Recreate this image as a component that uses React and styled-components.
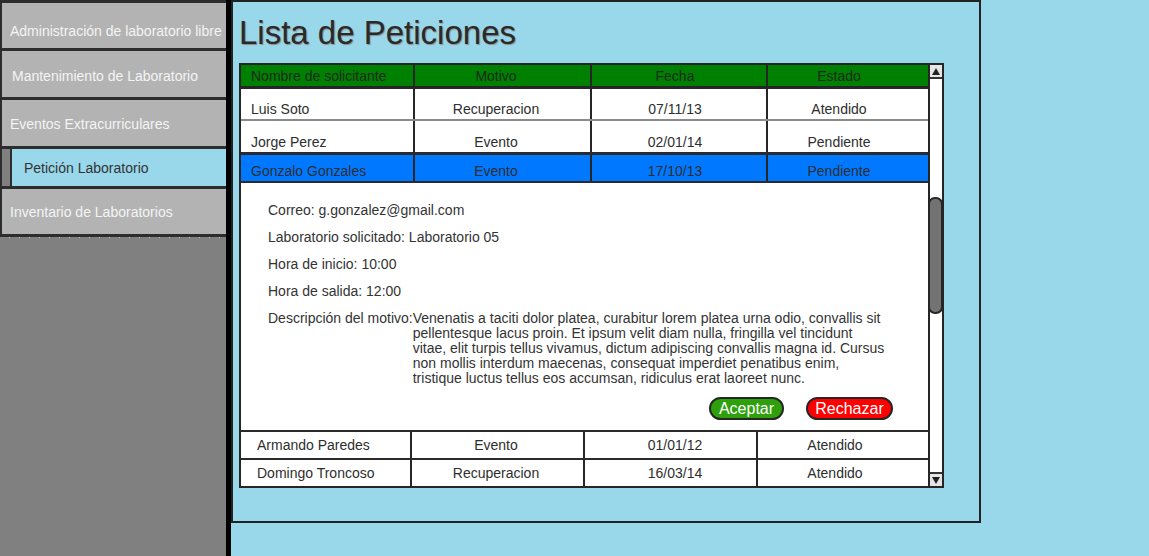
import React from 'react';
import styled, { createGlobalStyle } from 'styled-components';

const GlobalStyle = createGlobalStyle`
  body {
    margin: 0;
    background: #99d8ea;
    font-family: "Liberation Sans", Arial, sans-serif;
  }
`;

const UPPER_COLS = '174px 177px 176px 160px';
const LOWER_COLS = '171px 173px 173px 170px';

const menu = [
  { label: 'Administración de laboratorio libre', h: 45, top: 11, left: 8, first: true },
  { label: 'Mantenimiento de Laboratorio', h: 46, top: 4, left: 10 },
  { label: 'Eventos Extracurriculares', h: 46, top: 2, left: 8 },
  { label: 'Petición Laboratorio', h: 37, top: 0, left: 12, sub: true },
  { label: 'Inventario de Laboratorios', h: 45, top: 0, left: 8 },
];

const upperRows = [
  { name: 'Luis Soto', motivo: 'Recuperacion', fecha: '07/11/13', estado: 'Atendido', h: 30, line: '2px solid #8a8a8a' },
  { name: 'Jorge Perez', motivo: 'Evento', fecha: '02/01/14', estado: 'Pendiente', h: 31, line: '3px solid #2b2b2b' },
  { name: 'Gonzalo Gonzales', motivo: 'Evento', fecha: '17/10/13', estado: 'Pendiente', h: 26, line: '2px solid #2b2b2b', selected: true },
];

const lowerRows = [
  { name: 'Armando Paredes', motivo: 'Evento', fecha: '01/01/12', estado: 'Atendido', line: '2px solid #2b2b2b' },
  { name: 'Domingo Troncoso', motivo: 'Recuperacion', fecha: '16/03/14', estado: 'Atendido', line: 'none' },
];

const descripcion = [
  'Venenatis a taciti dolor platea, curabitur lorem platea urna odio, convallis sit',
  'pellentesque lacus proin. Et ipsum velit diam nulla, fringilla vel tincidunt',
  'vitae, elit turpis tellus vivamus, dictum adipiscing convallis magna id. Cursus',
  'non mollis interdum maecenas, consequat imperdiet penatibus enim,',
  'tristique luctus tellus eos accumsan, ridiculus erat laoreet nunc.',
];

const App = () => {
  return (
    <>
      <GlobalStyle />
      <Page>
        <Sidebar>
          {menu.map(item =>
            item.sub ? (
              <SubItem key={item.label} $h={item.h}>
                <SubLabel $left={item.left}>{item.label}</SubLabel>
              </SubItem>
            ) : (
              <MenuItem key={item.label} $h={item.h} $top={item.top} $left={item.left} $first={item.first}>
                {item.label}
              </MenuItem>
            )
          )}
          <Dots />
        </Sidebar>

        <Main>
          <Title>Lista de Peticiones</Title>
          <Table>
            <Rows>
              <Row $cols={UPPER_COLS} $h={21} $line="3px solid #262626" $bg="#008000">
                <Cell $head $left>Nombre de solicitante</Cell>
                <Cell $head $pr={13}>Motivo</Cell>
                <Cell $head $pr={8}>Fecha</Cell>
                <Cell $head $pr={18} $last>Estado</Cell>
              </Row>

              {upperRows.map(r => (
                <Row key={r.name} $cols={UPPER_COLS} $h={r.h} $line={r.line} $bg={r.selected ? '#0078ff' : '#fff'} $bottom>
                  <Cell $left>{r.name}</Cell>
                  <Cell $pr={13}>{r.motivo}</Cell>
                  <Cell $pr={8}>{r.fecha}</Cell>
                  <Cell $pr={18} $last>{r.estado}</Cell>
                </Row>
              ))}

              <Detail>
                <InfoLine>Correo: g.gonzalez@gmail.com</InfoLine>
                <InfoLine>Laboratorio solicitado: Laboratorio 05</InfoLine>
                <InfoLine>Hora de inicio: 10:00</InfoLine>
                <InfoLine>Hora de salida: 12:00</InfoLine>
                <Description>
                  <DescLabel>Descripción del motivo:</DescLabel>
                  <DescText>
                    {descripcion.map(l => (
                      <span key={l}>{l}</span>
                    ))}
                  </DescText>
                </Description>
                <Actions>
                  <ActionButton $bg="#2ea00c" $w={75}>Aceptar</ActionButton>
                  <ActionButton $bg="#ff0000" $w={87}>Rechazar</ActionButton>
                </Actions>
              </Detail>

              {lowerRows.map(r => (
                <Row key={r.name} $cols={LOWER_COLS} $h={26} $line={r.line} $bg="#fff">
                  <Cell $left $pl={16}>{r.name}</Cell>
                  <Cell $pr={3}>{r.motivo}</Cell>
                  <Cell $pl={9}>{r.fecha}</Cell>
                  <Cell $pr={16} $last>{r.estado}</Cell>
                </Row>
              ))}
            </Rows>

            <ScrollBar>
              <Arrow>
                <Triangle />
              </Arrow>
              <Thumb />
              <Arrow $down>
                <Triangle $down />
              </Arrow>
            </ScrollBar>
          </Table>
        </Main>
      </Page>
    </>
  );
};

const Page = styled.div`
  display: flex;
  align-items: flex-start;
  min-height: 100vh;
`;

const Sidebar = styled.nav`
  width: 231px;
  min-height: 100vh;
  flex-shrink: 0;
  box-sizing: border-box;
  background: #808080;
  border-right: 5px solid #000;
  display: flex;
  flex-direction: column;
`;

const MenuItem = styled.div`
  display: flex;
  align-items: center;
  flex-shrink: 0;
  height: ${props => props.$h - props.$top}px;
  padding: ${props => props.$top}px 0 0 ${props => props.$left}px;
  box-sizing: content-box;
  background: #b3b3b3;
  border-left: 2px solid #2d2d2d;
  border-top: ${props => (props.$first ? '3px solid #2d2d2d' : 'none')};
  border-bottom: 3px solid #2d2d2d;
  color: #f4f4f4;
  font-size: 14px;
  white-space: nowrap;
  overflow: hidden;
`;

const SubItem = styled.div`
  display: flex;
  flex-shrink: 0;
  height: ${props => props.$h}px;
  padding-left: 8px;
  background: #808080;
  border-left: 2px solid #2d2d2d;
  border-bottom: 3px solid #2d2d2d;
`;

const SubLabel = styled.div`
  flex: 1;
  display: flex;
  align-items: center;
  padding-left: ${props => props.$left}px;
  background: #99d8ea;
  border-left: 2px solid #2d2d2d;
  color: #333;
  font-size: 14px;
`;

const Dots = styled.div`
  height: 1px;
  background: repeating-linear-gradient(to right, transparent 0 9px, #c8c8c8 9px 10px);
`;

const Main = styled.main`
  width: 750px;
  height: 523px;
  flex-shrink: 0;
  box-sizing: border-box;
  border: 2px solid #222;
  padding: 12px 0 0 6px;
`;

const Title = styled.h1`
  margin: 0;
  font-size: 33px;
  line-height: 38px;
  font-weight: normal;
  color: #2a2a2a;
  text-shadow: 1px 1px 1px #8c8c8c;
`;

const Table = styled.div`
  margin-top: 11px;
  width: 705px;
  height: 425px;
  box-sizing: border-box;
  border: 2px solid #262626;
  background: #fff;
  display: flex;
  overflow: hidden;
`;

const Rows = styled.div`
  flex: 1;
  display: flex;
  flex-direction: column;
`;

const Row = styled.div`
  display: grid;
  grid-template-columns: ${props => props.$cols};
  height: ${props => props.$h}px;
  flex-shrink: 0;
  box-sizing: content-box;
  border-bottom: ${props => props.$line};
  background: ${props => props.$bg};
  align-items: stretch;
  & > div {
    align-items: ${props => (props.$bottom ? 'flex-end' : 'center')};
    padding-bottom: ${props => (props.$bottom ? '2px' : '0')};
  }
`;

const Cell = styled.div`
  display: flex;
  justify-content: ${props => (props.$left ? 'flex-start' : 'center')};
  box-sizing: border-box;
  padding-left: ${props => (props.$pl != null ? props.$pl : props.$left ? 10 : 0)}px;
  padding-right: ${props => props.$pr || 0}px;
  border-right: ${props => (props.$last ? 'none' : '2px solid #262626')};
  font-size: 14px;
  line-height: 16px;
  color: ${props => (props.$head ? '#1f2a1f' : '#2e2e2e')};
  white-space: nowrap;
`;

const Detail = styled.div`
  height: 249px;
  flex-shrink: 0;
  box-sizing: border-box;
  padding: 14px 0 0 27px;
  border-bottom: 2px solid #2b2b2b;
  color: #333;
  font-size: 14px;
`;

const InfoLine = styled.div`
  height: 27px;
  line-height: 27px;
`;

const Description = styled.div`
  display: flex;
  margin-top: 6px;
  line-height: 15px;
`;

const DescLabel = styled.div`
  white-space: nowrap;
`;

const DescText = styled.p`
  margin: 0;
  display: flex;
  flex-direction: column;
  white-space: nowrap;
`;

const Actions = styled.div`
  display: flex;
  justify-content: flex-end;
  gap: 22px;
  margin-top: 11px;
  padding-right: 35px;
`;

const ActionButton = styled.button`
  width: ${props => props.$w}px;
  height: 23px;
  padding: 0;
  box-sizing: border-box;
  border: 2px solid #262626;
  border-radius: 12px;
  background: ${props => props.$bg};
  color: #fff;
  font-family: "Liberation Sans", Arial, sans-serif;
  font-size: 16px;
  line-height: 19px;
`;

const ScrollBar = styled.div`
  width: 14px;
  flex-shrink: 0;
  box-sizing: border-box;
  border-left: 2px solid #262626;
  background: #fff;
  display: flex;
  flex-direction: column;
`;

const Arrow = styled.div`
  height: 12px;
  flex-shrink: 0;
  display: flex;
  align-items: center;
  justify-content: center;
  background: #e6e6e6;
  border-bottom: ${props => (props.$down ? 'none' : '2px solid #333')};
  border-top: ${props => (props.$down ? '2px solid #333' : 'none')};
  margin-top: ${props => (props.$down ? 'auto' : '0')};
`;

const Triangle = styled.span`
  width: 0;
  height: 0;
  border-left: 4px solid transparent;
  border-right: 4px solid transparent;
  border-bottom: ${props => (props.$down ? 'none' : '7px solid #222')};
  border-top: ${props => (props.$down ? '7px solid #222' : 'none')};
`;

const Thumb = styled.div`
  margin: 118px -1px 0 -2px;
  height: 117px;
  flex-shrink: 0;
  box-sizing: border-box;
  background: #737373;
  border: 2px solid #262626;
  border-radius: 7px;
`;

export default App;
